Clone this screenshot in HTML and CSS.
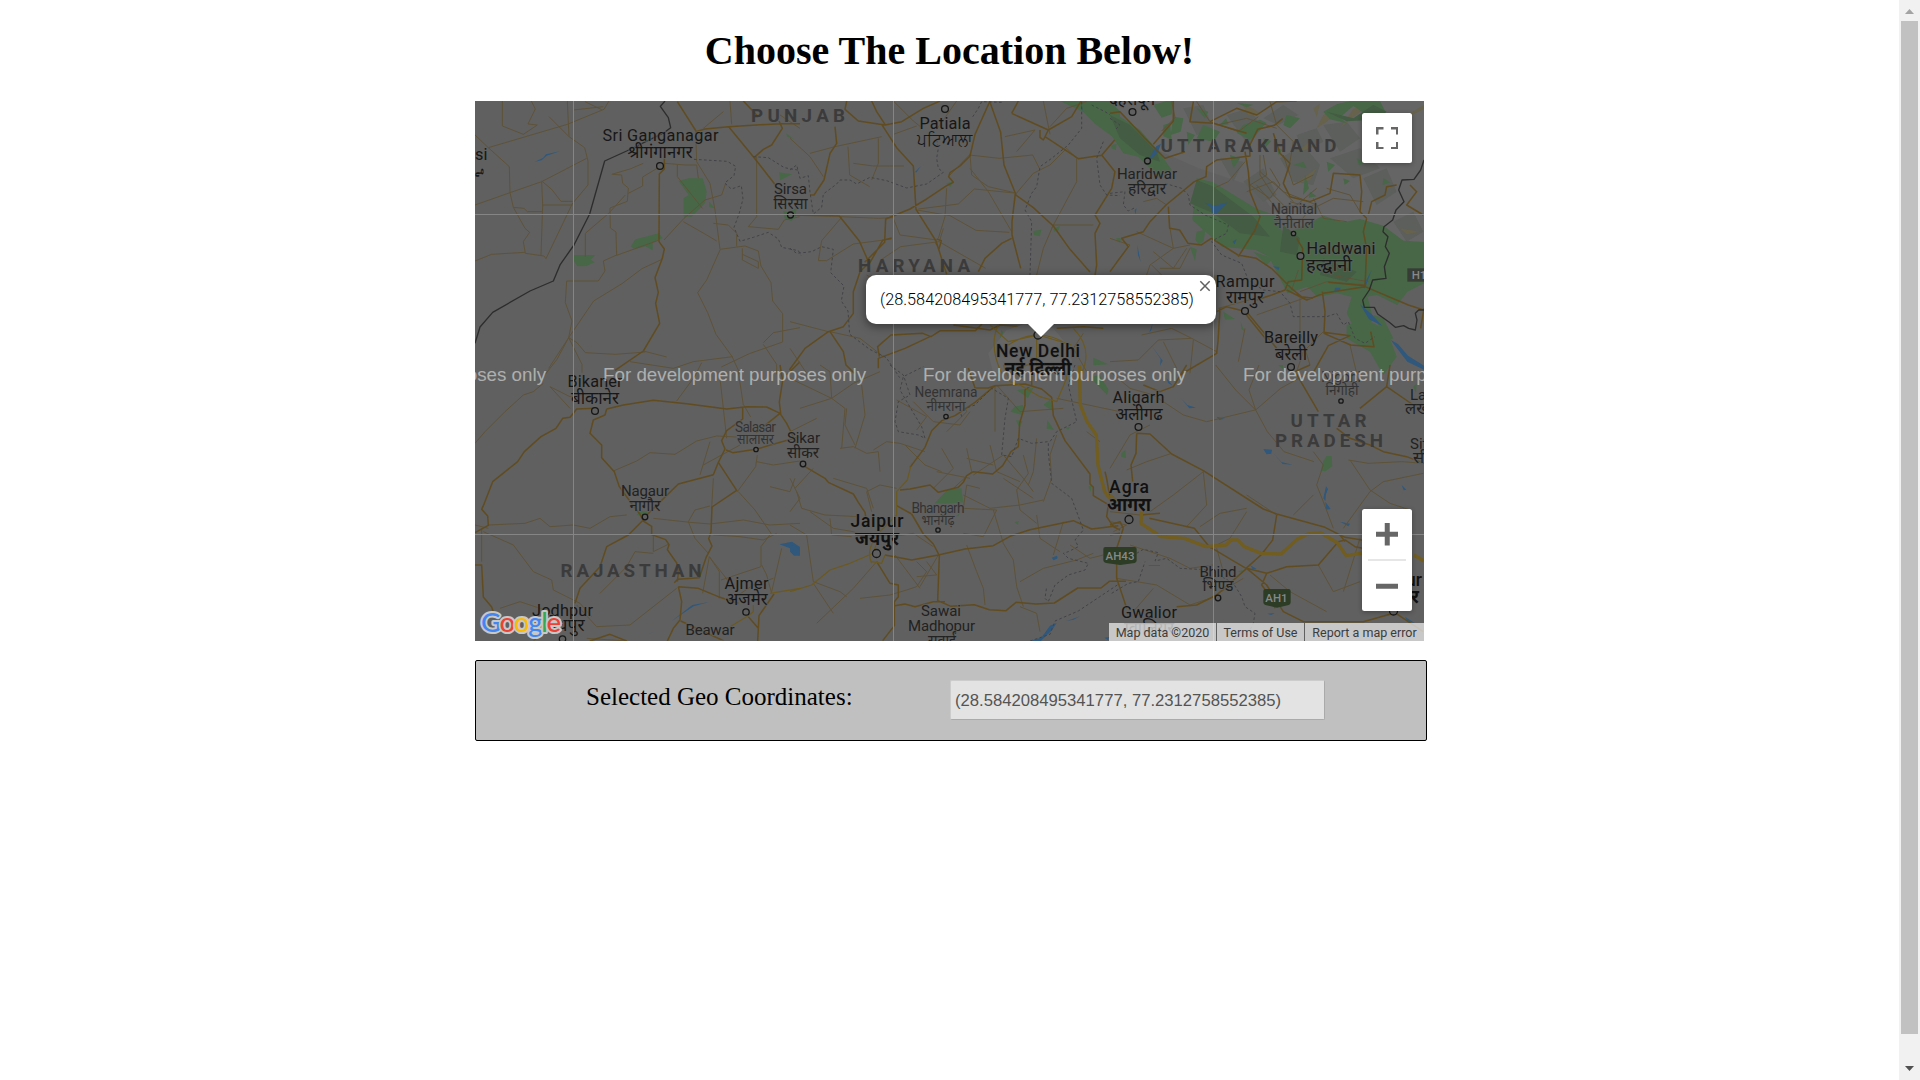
FILE: index.html
```html
<!DOCTYPE html>
<html lang="en">
<head>
<meta charset="utf-8">
<title>Choose The Location</title>
<link rel="stylesheet" href="styles.css">
</head>
<body>
<main class="page">
  <h1 class="title">Choose The Location Below!</h1>
  <section class="map">
    <svg class="map-canvas" viewBox="475 101 949 540" width="949" height="540">
      <!-- north-west -->
      <g transform="translate(470 95) scale(.33333)">
        <g class="park">
          <path d="M626 258l30-8h42l12 40-5 35-20 20-20 20h-24v-55l15-10zM718 320l16 20-16-4zM482 455l14-22 40-10 30-8 12 15-30 12v24l-22-12-30 8zM310 480h66l-14 14 12 8-26 12h-26l-12-18zM928 232l38 6-36 18zM948 115l24 18-20-8zM940 348l40 10-16 20-20-8z"/>
        </g>
        <path class="water" d="M195 200l25-12 8-10 42-9-40 13-15 14z"/>
        <g class="minor">
          <path d="M97 18v75l63 25 42-28-28-3 22-45-12-24M15 120l40 38 237-70 110-45 15-25M292 18l5 107 47 33 10 40v72l-46 55M310 45l90-10M345 20l50 24M55 158l63 57 2 78-105 37M120 293l95-33 135-70M215 258l30 25 28 36h35M215 260l3 70-5 152M218 330h90M120 293l10 44 32 3 10 10h45M130 337l35 63 14 12-19 28 6 35 56 8 6 8 80-167M15 498l50-20 100-6M297 125l-60-60M427 238l28 2 3 25 17 14-3 40-52 20 1 60 17 12 2 70 125-45M520 205l-40 17-55 16M475 295l43-22v-27l50-30M440 480l-40 18 5 30-20 30H290l-4 65 20 55-10 50 40 80v25M346 485v-70l70-60 50-55M296 728l-60 92M296 728l25 15 25 30 90 5 90-7M296 728l75-110 85-52 60-45 60-28M296 728l-35 65-35 45M585 205l60 5h35l5 40M622 210v35l75 95M677 110l3 90 40 65 15 80 15 118 75-10 40 15 8 45 30 50 5 55 30 38v85l-100 35-84 40M750 465l-40 90-27 38 30 60 25 65 48 66 25 55M817 460v35l48 25v-20l-48-22M730 385l45 5 25 25v40M640 380l70 40 30 18M582 435l60-65 63-55 50-15 12-35M860 185v180l-25 30 90 8 18-28 46-10M480 800l130 20 60-20 118-15M520 768l70 18M880 748l40 60v30M990 698l-80 15-30 30M780 18l5 70M700 100l60-50M930 60l60 40"/>
        </g>
        <g class="major">
          <path d="M622 20l56 88M677 110l28-8 71-7 154-9h60M776 95l74 90 82 105M820 18l42 44M852 188l28-25 25-13 32-50-10-22M583 190v32l-15 15-1 203 16 22-6 28-22 58 10 44-8 33 12 60-49 83-85 58M990 800l-40 40"/>
        </g>
        <path class="border" d="M585 18l-14 16 24 34 7 30-18 14-114 56-66 30-45 159-47 93-41 58-21 50-70 30-112 64-38 44-15 49"/>
        <path class="district" d="M672 193l100 6 25 15-5 28-28 22 20 18 30-10 5 40-12 45-15 40 18 42 40-12 45-15 30 20 10 25 50 10 8 14M850 185l45 3 48 30 45 8"/>
      </g>

      <!-- north-centre -->
      <g transform="translate(790 95) scale(.33333)">
        <g class="park">
          <path d="M810 18h160l20 10v110l-35-22-40-30-35-35zM0 350l20-12-4 30-16 10zM468 265l20-5-6 16zM730 408l24-4-4 20-18-4zM790 402l20-10-4 14-14 4zM965 150l15-3-3 18-13-5zM910 788l45 20-45 3zM640 712l-12 28 6-35zM978 430h12v14z"/>
        </g>
        <path class="water" d="M374 232l18-18-12 18zM874 20l4 28-5-8zM698 706l14-6-10 8z"/>
        <g class="minor">
          <path d="M0 130l60 55 40 60M60 175l75-20 140-30M174 155l5 85 60 35M265 130v75l-20 50M310 118l70-25M190 205l60 8h92M310 18l60 60 25 20M500 18l-60 85M470 280l-5 85-20 65M385 342l120-15 48-45 120 12M480 240l60-62M538 180l90 10 100-10 20 40M540 180l5 60 50 35 78 18M380 345l100 17 78 44 100 6M310 368l-45 2-115-5M305 432l-115 15-80 50h-25l10-60 60-70M440 435l-110-15-20-50M447 440l-115 15-60 40M447 440l140 80M460 400l-12 40M675 300l55-65 50-25 50-50 30 30v70l-75 140M680 170l55-65-90 20M790 390h120M740 540l20-80 30-70M665 410l-70-120-55-70M0 680l115 30M230 540l80 50M0 760l50 75M120 710l90 20 70 55M880 715l-30 45 40 70M890 20l-60 20-50 55M760 18l20 100"/>
        </g>
        <g class="major">
          <path d="M170 18l-5 25 40 35 80 12 50-10 65-40 50-22M275 88l45 70 50 55 8 130 60 95 32 100M285 88l-25-38-15-32M600 18l-45 100-15 65-30 30-30 20-4 12 14 17-20 10-60 40-50 30-73 30-3 70-60 60M600 22l32 90 10 98 34 85-10 85v40l26 100M675 298l55 40 60 55 50 70 60 68M665 430l-30 15-50 45-20 40M665 55l110 50-15 30-10-8v-22M665 55l20-37M765 125l100 66 70-10 55-65M775 105l70-40 28-47M935 180l40 50-10 50-50 80 15 25-15 30 5 95-8 50M0 360l148 3 60 75 30 68 40-70 27-7M240 500l-30 30-20 60v65l-30 40-45 15-70 50-47 65M120 710l40 60 8 40 25 25M268 785l-5-30 40-35 95-5 25 10 28-18h105l20-20M420 725l-75 35-80 30v30M490 690l110 15 30-15 70 5M800 700l80-5 60 5M440 432l14 5-7 25-10-20M135 95l5 50-20 30-18 80-30 45H60"/>
        </g>
        <path class="urban" d="M650 705l60-20 80 15 50 60 10 75H610l-15-60z"/>
        <g class="ring"><path d="M625 690q-30 60 10 145M850 700q60 60 25 135M655 750q90-60 180 0M660 835q90-60 160 0M740 690v145M600 690l55 50 90-20 100 30"/></g>
        <path class="district" d="M0 225l20-15 10 40 25-8 5 50 10 65 25-20 5-40 40-30 10-12h30l20 12 40-20 50 10 60 22 60-12 50-35-15-12-5-30 5-30-5-25M0 460l20 15 45-5 30-15 35 8-8 70 40 40-8 45 20 30 5 70 60 45 50 25 40 60M635 22l-60-2-10 20-20 30M875 20v80l-40 50-50 40-35 25-10 60-15 20-20 50 20 35-5 160M905 30l40 20 40 25M940 140l-20 50 10 80 20 30 40 2"/>
      </g>

      <!-- north-east -->
      <g transform="translate(1110 95) scale(.33333)">
        <path class="hills" d="M0 18h942v440l-80-10-90-60-110-10-50 30-110-40-60-90-180-60L130 160 40 60z"/>
        <g class="slopes">
          <path d="M350 60l70-20 35 60-40 50zM460 70l60-40 45 30-60 30zM220 40l60-10 30 70-50 20zM510 190l70-40 50 60-20 60-60-10zM640 90l70-10 40 50-60 40zM660 190l90-30 60 60-80 30zM400 260l60-40 40 80-40 20zM760 250l70-30 30 70-60 40zM330 190l70 10-30 60zM560 120l60-20 20 40-60 30zM850 380l60-30 30 60-50 30z"/>
        </g>
        <g class="ridge">
          <path d="M640 60l-20 40 30-20 50-44zM690 100l60-50 40-28-60 20zM870 100l20-40 52-30v12l-40 20zM560 170l40-30 15 10-30 16zM800 210l50-60 60-30-30 40-50 30zM870 400l60 10-40 8zM550 270l70-50-20 35zM395 25l20 35 40-2-30-20zM760 80l50 12-30 20zM610 40l20-14-10 40z"/>
        </g>
        <g class="park">
          <path d="M0 50l30 15 60 40 60 70 35 50-40 20-60-60-45-10-40-60zM260 250l50 12 130 80 60 20 20 60 60-30 60-30 60 20 50-10 70 20 60 45 80 5 42 20v110l-50-12-60 30-30 40-60-30-60 10-60-15-60 10-30-30-60 20-55-110-40-20-100-10-90-80zM260 410l26-6-5 35-15 10-10-15zM130 30l40-12h20l-5 40-30 10zM190 65l30 5-8 40-30 10zM160 90l20-6 5 50-25-10zM230 110l25 10-20 30zM400 90l50-16 20 10-50 50-40-20zM640 50l40-22 40-10h90l20 40-70-5-30-20-40 34 20 18-50-12zM530 60l40 10-30 30-20-10zM260 40l35 10-10 20zM380 24l50 5-20 8zM280 90l50 20-20 30-50-10zM430 470l60 20-20 20zM240 455l20 8-5 35zM340 650l35 22-30 2zM392 680l12 30-10-8zM730 590l40 5 20 80-50 40-30-60zM710 690l60-15 60 30 30 80-40 55-40-70-70-40zM790 660l30 10 30 60-20 10zM900 460l42 5v60l-42-30zM360 180l30 10-20 30zM550 210l30-10 10 20zM585 240l12 40-18 20zM650 200l25 10-20 20zM740 190l25 15-18 6zM20 430l25 2-25 8zM460 130l24 8-18 20zM500 160l16 4-10 16zM700 250l20 8-16 12zM820 250l20 12-22 8zM600 290l20 14-24 4zM860 60l24 8-20 16zM330 90l18-20 8 18z"/>
        </g>
        <g class="forest"><path d="M0 60l60 30 80 80 10 30-60-20L30 130zM260 255l50 20 120 90 50 60-90-10-80-60-70-30zM650 50l80 20 60-40 40 20-40 24-80 5zM520 390l50 40-10 50-50-10zM640 490l100 40-30 30-80-20z"/></g>
        <path class="water" d="M121 184l18-30 14-8-10 28-22 20zM282 322l32 10 40-10-34 34-12-2-6-18zM82 450l10 50-8-20zM125 752l33 45-8 15 2-20zM76 360l4-20-6 5zM368 440l12-8-6 16zM488 514l20 2-2 10zM675 578h16v10h-18zM118 712l10-28-4 22zM785 525l-20 55-8-2zM750 628l35 30 32 35-40-20zM842 735l22 12 30 35 48 30v12l-50-24z"/>
        <g class="minor">
          <path d="M185 18l10 50-40 40M260 20l40 60 85 30 60-45M320 90l90-20 90 30M480 20l20 70 50 50-10 60M405 200l-50 60-45 20M460 180l10 60-50 30 60 40 30-40-30-50M520 180l30 90 60-30M440 270l60 70 60-10 60-50M410 290l80-30 60 60M450 230l70 60 100 40M540 320l70 20 60-30 90 10M610 310l30 60 70 10M450 180v60l40 60 45 45M610 330l-40 50M650 280l70 20 30 50M180 400l10 60-70 50-20 60M240 450l-50 10-110-50M130 470l60 50 40-60M150 520h60l30-60M0 430l60 20-40 50M125 510l60 60M315 540v60M545 585l20-60M570 610v100l30 100M440 660l140-50M320 770l-75-40-60-30-90 20M250 735l-10 100M0 800l85-5 60-60 100-5M160 740l40 80M325 640l110-30M570 590l80-30 120 10M660 540l115 20M640 710l-60 60-20 60M720 750l20 85M405 700l-20 100M100 320l40-10 30 20"/>
        </g>
        <g class="major">
          <path d="M0 530l55-75-20-25 65-20 20-30 48-50 85-70 35-15 2-30 30-20 100-12-2-30 25-50 50-12 25-20M175 335l4 65 30 5 25 40 40 5 30-20 80 50 55 10 45 30 60 60 30 25 35 5M0 55l30-5 75 80 60 60 60-20M190 18v60l-60 70M250 20l-10 60 70 5 100 30M300 80l80-40 60 20 60-40 60-2M405 170l10 60 5 60 30 75-15 40-50 80M560 430l18 30-3 95-40 5-10 25-40 15-45 15M770 370l-20-20 5-60-5-50-80-5-10 60-60 25-60-15-20-40 20-60-30-30-20-60M775 360l10-40 40-20 5-25 30-5M900 270l20 20-30 40 50 30M770 370l-10 40 10 50-5 115-125 20M765 572l-110-10M765 575l130 55 47 15M637 590l8 60-3 65 80 35 70 5-10-45M640 712l80 10-65 30-45 80M320 650l30-15 60 15 90 110M330 640l-6 100-4 35-110 65M405 655l65 80M530 585l60 30 50-20M942 640l-10 60"/>
        </g>
        <path class="border" d="M942 195l-10 30-20 28-36 2-10 30 16 35-24 25-10 30-26 20-3 15 15 15-8 30 12 20-15 40 5 35-40 5-10 30-20 30 5 22h30l10 20 35 25 18 15 25-5 15 8 20 5 5-30-5-20 10-10h20"/>
        <path class="district" d="M0 70l30 20-15 15M165 265l50 15 20 20 5 30 45 30 70 30-5 25-30 15-15 10 30 40 60 25 20 50 45 30 50 5 30 35 10 40h100l30-10 20 35 15-10 20 50 30 15 30-20M0 295l45-5-5 40 15 18 20-10"/>
        <g class="shield-dark"><path d="M892 520h50v40h-50z"/></g>
      </g>

      <!-- south-west -->
      <g transform="translate(470 365) scale(.33333)">
        <path class="park" d="M500 450l12-12 20 2v14z"/>
        <path class="water" d="M928 538l38-8 24 16v26l-14-4-8-15zM605 768l62-48 50-9-46 13zM536 806l26-8-20 6z"/>
        <g class="minor">
          <path d="M15 235l30-35 60-60 55-50 30-10 30-25M240 65l60 65M240 65l60 30 60-10M430 318l70-30 40-25 75 5 65-40 60-15 60 3M620 108l55-75 20-40M805 20l15 100M820 118l22 38M862 270l-5 35-55 75M860 290l50 10 80-12M900 365l60 15 15-40M55 480l110-5 45-15 30 25 70-5 50 10 60-35 50-5M35 490v100M40 500l90 40 60 80 55 25 5 30 40 20 40 20 35 40M550 460l110 12 60 5 100-12 80 15 90-5M655 470l20-35 45-12M655 470l20 50 40 45M805 380l50 55 48 70-30 40v60l-60 20-60 20M730 510l80 5 70 10 40-20M550 510v50l45-22M495 560l55 5M495 560l-25 45-80 80M718 575l-20 110M718 575l30 45v80M718 575l70 90M790 700l60-40 60-20M875 600l15 30 15 55M320 720l60 65 100-5 140-110M15 480l40 10M90 730l60-20 90 30M250 780l-60 48M350 820l120 8M690 330l30-100M700 300l110-60M935 550l-30 130M770 220l-20-180M725 430l5-90"/>
        </g>
        <g class="major">
          <path d="M375 130l-55 2-20 25-22 3-20 30-45 25-50 45-20 30-75 60-25 65-8 18 18 20 2 28-40 22M410 132l50-12 90-14 100 10 120 16 60-7 60 1 42 20-4-35 10-65-8-46M410 132l-5 18-35 15-10 40 35 35v38l38 42 15 45 40 55 22 28 10 20 25 16v25l42 15 10 15-5 15 28 40 5 30-3 25M525 460l-50 50-65 35-20 60-60 65-15 45M525 455l100-98 105-28 15-37 55 84-74 50-3 75-7 20 10 22-18 35-20 60-65 5-10 10M745 292l20-40-10-25 15-30 48-35v-35M768 255l20 8 70-10 130-38M930 145l20 30 40 80M930 145l-72 58M15 600h20l5 96 25 30 10 30M625 665l60 5 60 25 60 20M625 665l10 45-5 55-20 25-18 38M360 828l60-20 50 20M835 755l30 35 2-38 45-65M865 790l-2 38M632 768l130 60"/>
        </g>
        <path class="yellow-thin" d="M780 785l50-30 20-15v-20M900 685l90-15"/>
      </g>

      <!-- south-centre -->
      <g transform="translate(790 365) scale(.33333)">
        <g class="park">
          <path d="M434 415l38-40 42-5 6 42-50 4zM498 454l12-10-4 10zM674 125l25-5-2 30-36-10zM678 166l20 2-10 20zM762 118l18-14 10 35-28-18zM772 165l20 30-22-4zM910 35l18-6 28 45-5 15-38-38zM895 365l10-5-3 20zM680 75l50-6-16 30zM674 472l12-4-2 12zM826 188l16-2-8 8z"/>
        </g>
        <path class="water" d="M0 540l18 4 12 14-2 14H12L0 560zM785 578l16-6 2 8-12 6zM720 828l34-10 26-36 20-8-14 22-34 32zM830 768l40-14-20 10zM943 818l14-2-2 10z"/>
        <g class="minor">
          <path d="M125 100l-5-80-30-20M125 100L0 40M125 100l65-45 80-35M125 100l-95 30M125 100l40 30-10 120M170 130l-5 50 30 60M215 60l10 90-30 100M0 200l80-40M250 255l40-25 40 5 75 25M150 250l40-5 40 20 35-5 5 60M130 340l100 30 20 60M245 440l-15-60 40-20 50 10M15 370l55-60M20 380l15 50 70 20 100 5M60 440l70 50 60 10 50 20M320 105l90 50-30 40M370 110l60 60 80 10 30-40M510 100l20 40-60 60M430 370l60-60-35-60M440 320l100 20M530 250l15 70-55 50M550 330l90-60 60 70 30 40M570 370l-40-10-10 70 100 5-40 80-60-10M520 390l80 40 90-10 70-15M600 240l20 80 70 30M700 270l15 55-35 50 10 60 50 40M640 340l90 60M610 435l30 100 30 50 10 80 20 60M530 540l30 80 20 50 5 50M690 650l70-40 100-25 50-20M380 590l30 30-30 45-30 10-50 15-90 10M410 590l30 40-60 5M315 570l60 80 15 20M445 570l-55 95M345 240l60 60 50 20M740 220l-10 100-15 40M800 210l-20 60 5 70-25 70M0 480l50 30 20 140 80 30 20 15M120 460l5 50 60 5M0 340l30 60-30 40M70 655l60 90M260 590l-70 80-110 105M740 450l10 70 60 40M820 470l-30 100M310 515l60-10 60 40M530 280l80 20M750 800l-10-55-50-20M840 540l60 40 40-10M620 60l70 80 130-10M800 100l190 40M890 200l40 30M615 60v140"/>
        </g>
        <g class="major">
          <path d="M40 302l65 38 10 12 75 35 15 25 20 30 5 30M330 375l30-3 60-12 25 22 60-15 15-15 10-20 20-12 58 7 30-25 25-42 22-15 4-70 16-55v-45l20-15v-40M615 62l-60 50-60 40-40 15-30 30-20 50-45 60M615 62l-20 7h-40l-20-60M615 62l90-5 50 15 30 25 5 55 35 75 75 100v30l10 10v25l50 30M320 422l45 25 35 60 30 30 18 35-5 135 40 17 70-5 45 15 50 3 30-25 60 5 55-3 70-45h70l25-20h50M260 590l40 65 25 5v35l-12 15v72l-35 45M315 722l30-5 30 8 55-15h35M285 570l80 15 80-15 80-18 85-10 50-28 60-20 130-27 55 25 80-10M955 420l-5 35 20 30 20 10M960 400l-10-60-5-20"/>
        </g>
        <path class="yellow-thin" d="M362 305l-10 40-32 35v70l-50 50-20 65-70 30-60 20-55 45-65 20M640 0l20 50 30 10 60 35 50 15 30-70-10-40M245 590l30 5 10-25M250 530q-20 30-5 65"/>
        <path class="highway" d="M868 0l3 120 20 50 28 40 5 90 20 80 15 20"/>
        <path class="district" d="M300 0l40 30 20 60-35 20-10 60 10 30 60 10 20 10-10-35-30-50-35-60 10-40 60-30M515 155l-5-20 45-15 50-50 50 30-10 60-10 110 30 5 20-55 40 15 50-5v35l10 90 60 45 15 40 20 55-25 30 10 20-30 15-15 5 15 15 60 15-10 20-50 15-40 30-20 50-10-10 5-35M855 0l-20 60 25 110-60 30-20 30M720 828l60-20 15-40 70-30 60-40 60-40"/>
      </g>

      <!-- south-east -->
      <g transform="translate(1110 365) scale(.33333)">
        <g class="park"><path d="M640 288l10-15h15l2 30-20 16-15-2zM34 265l12-10 2 24-14-4zM910 65l10-10-2 30zM505 0h14v12zM383 620l15-5v8z"/></g>
        <path class="water" d="M212 98l20 22 26 8-20 2zM460 252l26 2-2 12-14 2zM490 265l24 26 34 8-30-2zM320 155l24 6-16 4zM640 400l8-36 6 8-6 16-2 20zM646 410l16 22-14 2zM690 470l30 6-5 8zM170 40l18 22-14-8zM420 600l20 12h-12zM116 601h34v2h-34zM472 746l22-2-10 6zM875 360l14 14-8 2zM885 755l30 20-24-6z"/>
        <g class="minor">
          <path d="M0 20l60 50 70 20 90 60 70 20 145-35M437 135l75-65 90-50M437 135l-60-60-60-75M437 135l35 65 50 60 90 30M437 135l-20-60 30-75M280 320l10 100-60 65M280 320l-90 70-70 50M0 310l60-100 60-30M185 265l-75 25-60 25M410 430l-80 15-60 40M410 440l-50 80-60 30M500 450l-90-60M670 490l-30-80-20-50 20-60-30-40M610 390l-60 60M715 285l60 10 100-5 67 5M720 285l60 90 60 40 60 20M780 380l40-30 120-25M780 380l-80 110M625 600l45 80 80-30M750 520l-50 160M0 440l90 10M60 540l120 40 60 30 70-10M20 640l120 20 100 60M240 720l60-20 100-60M70 740l60-70M480 630l60 50 110 60M340 620l-20-70M0 470l50 10-40 20"/>
        </g>
        <g class="major">
          <path d="M80 205l40 2 65 60 95 50 180 115 40 15 145 40 60 30 65 10M80 205l-2 60-15 35 5 50M500 450l-12 75-35 45-45 40-110-65-45-55-135-30M90 450l60-5M555 20l70 120M600 0l-45 20M750 130l80-65 80 55M830 65l10-65M100 60l50 20 40-15 40-65M410 610l60 15 60-20 95-5 60-70 20-5 30 20 50 10M470 625l-15 35 30 40 10 30M410 610l60 50 50 80 60 30h180l90-25M410 610l-90 80-60 30-60 5M705 530l-15-20-20-10M40 490l-20 60v90l30 90M0 480l30-10 10 20M680 190l40 30 60 20 40 20 70 15 52 20M0 510l30-5M850 740l90 60"/>
        </g>
        <path class="highway" d="M95 440l-2 35 60 40 70 5 65 25 60-5 15-15h20l20 20 50 20 60 2 50-45 30-15 40-3 50 30 25 38 50-8h55M912 570l30 18M0 390l20 20"/>
        <path class="district" d="M80 565l20-12 45 10-10 25 35-8 40 30 90 5 70 40 25 40 10 30 30 20-5 30-10 20M5 685l50-30 30-5 20-60"/>
        <g class="shield"><path d="M-14 546H74q6 0 6 6v34q0 6-6 8L31 600-12 594q-8-2-8-8v-34q0-6 6-6zM466 672h70q6 0 6 6v34q0 6-6 8l-35 8-35-8q-6-2-6-8v-34q0-6 6-6z"/></g>
      </g>

      <!-- place labels -->
      <g class="city">
        <g class="dots">
          <circle cx="660" cy="166" r="3.4"/><circle cx="790.5" cy="215" r="3"/><circle cx="945" cy="109" r="3.4"/><circle cx="1132.500" cy="112" r="3.4"/><circle cx="1147.500" cy="161" r="3"/><circle cx="1293.500" cy="233.500" r="2.200"/><circle cx="1300.500" cy="256" r="3.400"/><circle cx="1245" cy="311" r="3.400"/><circle cx="1291" cy="367" r="3.400"/><circle cx="595" cy="411" r="3.400"/><circle cx="756" cy="449.500" r="2.200"/><circle cx="803" cy="464" r="2.800"/><circle cx="645" cy="517" r="2.800"/><circle cx="746" cy="612" r="3.200"/><circle cx="562.500" cy="639" r="3.200"/><circle cx="946" cy="416.500" r="2.200"/><circle cx="938" cy="530" r="2.200"/><circle cx="876.500" cy="553.500" r="4"/><circle cx="1138.500" cy="427" r="3.400"/><circle cx="1129" cy="519.500" r="4"/><circle cx="1341" cy="401" r="2.200"/><circle cx="1218" cy="598" r="2.800"/><circle cx="1393.500" cy="611" r="4"/><circle cx="1038" cy="335" r="4"/>
        </g>
        <text x="660.500" y="141" textLength="116">Sri Ganganagar</text><text class="hi" x="660" y="158" textLength="65" lengthAdjust="spacingAndGlyphs">श्रीगंगानगर</text>
        <text class="start" x="475" y="159.500">si</text><text class="start hi" x="475" y="174" textLength="9" lengthAdjust="spacingAndGlyphs">مے</text>
        <text class="m" x="790.500" y="194" textLength="33">Sirsa</text><text class="hi m" x="790.500" y="209" textLength="34" lengthAdjust="spacingAndGlyphs">सिरसा</text>
        <text x="945" y="129" textLength="51">Patiala</text><text class="hi" x="944.500" y="145.500" textLength="56" lengthAdjust="spacingAndGlyphs">ਪਟਿਆਲਾ</text>
        <text class="hi" x="1132" y="104.500" textLength="46" lengthAdjust="spacingAndGlyphs">देहरादून</text>
        <text class="m" x="1147" y="178.500" textLength="60">Haridwar</text><text class="hi m" x="1147" y="193.500" textLength="38" lengthAdjust="spacingAndGlyphs">हरिद्वार</text>
        <text class="s" x="1294" y="214" textLength="46">Nainital</text><text class="hi s" x="1294" y="228" textLength="40" lengthAdjust="spacingAndGlyphs">नैनीताल</text>
        <text x="1341" y="253.500" textLength="69">Haldwani</text><text class="hi" x="1329" y="270.500" textLength="46" lengthAdjust="spacingAndGlyphs">हल्द्वानी</text>
        <text x="1245" y="286.500" textLength="59">Rampur</text><text class="hi" x="1245" y="303" textLength="38" lengthAdjust="spacingAndGlyphs">रामपुर</text>
        <text x="1291" y="342.500" textLength="54">Bareilly</text><text class="hi" x="1291" y="359.500" textLength="32" lengthAdjust="spacingAndGlyphs">बरेली</text>
        <text x="595" y="387" textLength="55">Bikaner</text><text class="hi" x="595" y="403.500" textLength="48" lengthAdjust="spacingAndGlyphs">बीकानेर</text>
        <text class="s" x="755.500" y="432" textLength="41">Salasar</text><text class="hi s" x="755.500" y="444" textLength="37" lengthAdjust="spacingAndGlyphs">सालासर</text>
        <text class="m" x="803.500" y="442.500" textLength="33">Sikar</text><text class="hi m" x="803" y="457.500" textLength="32" lengthAdjust="spacingAndGlyphs">सीकर</text>
        <text class="m" x="645" y="496" textLength="48">Nagaur</text><text class="hi m" x="645" y="510.500" textLength="31" lengthAdjust="spacingAndGlyphs">नागौर</text>
        <text x="746.500" y="588.500" textLength="44">Ajmer</text><text class="hi" x="746.500" y="604.500" textLength="42" lengthAdjust="spacingAndGlyphs">अजमेर</text>
        <text x="562.500" y="615.500" textLength="61">Jodhpur</text><text class="hi" x="562" y="631" textLength="45" lengthAdjust="spacingAndGlyphs">जोधपुर</text>
        <text class="m" x="710" y="635" textLength="49">Beawar</text><text class="hi m" x="710" y="651">ब्यावर</text>
        <text class="s" x="946" y="397" textLength="63">Neemrana</text><text class="hi s" x="946" y="411" textLength="39" lengthAdjust="spacingAndGlyphs">नीमराना</text>
        <text class="s" x="938" y="512.500" textLength="53">Bhangarh</text><text class="hi s" x="938" y="525" textLength="33" lengthAdjust="spacingAndGlyphs">भानगढ़</text>
        <text class="b" x="877" y="526.500" textLength="53">Jaipur</text><text class="hi b" x="877" y="545" textLength="44" lengthAdjust="spacingAndGlyphs">जयपुर</text>
        <text class="m" x="941" y="616" textLength="40">Sawai</text><text class="m" x="941.500" y="631" textLength="67">Madhopur</text><text class="hi m" x="942" y="646" textLength="28" lengthAdjust="spacingAndGlyphs">सवाई</text>
        <text class="b" x="1038" y="356.500" textLength="84">New Delhi</text><text class="hi b" x="1038" y="375" textLength="67" lengthAdjust="spacingAndGlyphs">नई दिल्ली</text>
        <text x="1138.500" y="403" textLength="52">Aligarh</text><text class="hi" x="1139" y="419.500" textLength="47" lengthAdjust="spacingAndGlyphs">अलीगढ</text>
        <text class="b" x="1129" y="493" textLength="40">Agra</text><text class="hi b" x="1129" y="511" textLength="44" lengthAdjust="spacingAndGlyphs">आगरा</text>
        <text class="s" x="1341" y="382">Nigohi</text><text class="hi s" x="1342" y="395" textLength="33" lengthAdjust="spacingAndGlyphs">निगोही</text>
        <text class="start m" x="1410" y="400">Lakhimpur</text><text class="start hi m" x="1405" y="414">लखीमपुर</text>
        <text class="start m" x="1410" y="449">Sitapur</text><text class="start hi m" x="1413" y="463">सीतापुर</text>
        <text class="m" x="1218" y="576.500" textLength="37">Bhind</text><text class="hi m" x="1218" y="590.500" textLength="31" lengthAdjust="spacingAndGlyphs">भिण्ड</text>
        <text x="1149" y="617.500" textLength="56">Gwalior</text><text class="hi" x="1149" y="634" textLength="50" lengthAdjust="spacingAndGlyphs">ग्वालियर</text>
        <text class="b" x="1394" y="586">Kanpur</text><text class="hi b" x="1394" y="603" textLength="50" lengthAdjust="spacingAndGlyphs">कानपुर</text>
        <g class="shield-text"><text x="1120" y="560">AH43</text><text x="1276.500" y="602">AH1</text><text x="1419" y="279">H1</text></g>
      </g>
      <g class="state">
        <text x="798" y="121.500" textLength="94">PUNJAB</text>
        <text x="1248.500" y="151.500" textLength="176">UTTARAKHAND</text>
        <text x="914" y="271.500" textLength="112">HARYANA</text>
        <text x="1328.500" y="426.500" textLength="76">UTTAR</text>
        <text x="1329" y="446.500" textLength="108">PRADESH</text>
        <text x="631" y="576.500" textLength="141">RAJASTHAN</text>
      </g>
      <path class="grid" d="M573.500 101v540M893.500 101v540M1213.500 101v540M475 214.500h949M475 534.500h949"/>
      <g class="watermark">
        <text x="283" y="381" textLength="263">For development purposes only</text>
        <text x="603" y="381" textLength="263">For development purposes only</text>
        <text x="923" y="381" textLength="263">For development purposes only</text>
        <text x="1243" y="381" textLength="263">For development purposes only</text>
      </g>
      <text class="logo" x="481" y="631.500" textLength="80"><tspan class="blue">G</tspan><tspan class="red">o</tspan><tspan class="amber">o</tspan><tspan class="blue">g</tspan><tspan class="green">l</tspan><tspan class="red">e</tspan></text>
    </svg>

    <div class="popup">
      <span>(28.584208495341777, 77.2312758552385)</span>
      <svg class="popup-close" viewBox="0 0 12 12" width="12" height="12"><path d="M1.300 1.300l9.400 9.400M10.700 1.300l-9.400 9.400"/></svg>
    </div>

    <div class="control fullscreen">
      <svg viewBox="0 0 18 18" width="22.500" height="22.500"><path d="M0 0v6h2V2h4V0H0zm16 0h-4v2h4v4h2V0h-2zm0 16h-4v2h6v-6h-2v4zM2 12H0v6h6v-2H2v-4z"/></svg>
    </div>
    <div class="control zoom">
      <svg viewBox="0 0 18 18" width="22.500" height="22.500"><path d="M18 7h-7V0H7v7H0v4h7v7h4v-7h7z"/></svg>
      <div class="zoom-divider"></div>
      <svg viewBox="0 0 18 18" width="22.500" height="22.500"><path d="M0 7h18v4H0z"/></svg>
    </div>
    <div class="credits"><span class="credit-data">Map data ©2020</span><span class="credit-terms">Terms of Use</span><span class="credit-report">Report a map error</span></div>
  </section>

  <section class="coords">
    <label class="coords-label" for="geo">Selected Geo Coordinates:</label>
    <input class="coords-input" id="geo" type="text" value="(28.584208495341777, 77.2312758552385)" disabled>
  </section>
</main>
<aside class="scrollbar">
  <svg viewBox="0 0 9 5" width="9" height="5"><path class="up" d="M0 5h9L4.500 0z"/></svg>
  <div class="thumb"></div>
  <svg viewBox="0 0 9 5" width="9" height="5"><path class="down" d="M0 0h9L4.500 5z"/></svg>
</aside>
</body>
</html>
```
FILE: styles.css
```css
* { box-sizing: border-box; }
body { margin: 0; height: 1080px; display: flex; overflow: hidden; background: #fff; color: #000; font-family: "Liberation Serif", serif; }
.page { width: 1899px; display: flex; flex-direction: column; align-items: center; }
.title { margin: 28px 0 27px; font-size: 40px; line-height: 46px; font-weight: bold; }

.map { position: relative; width: 949px; height: 540px; overflow: hidden; background: #606060; }
.map-canvas { display: block; }
.map-canvas path { fill: none; stroke-linejoin: round; }
.map-canvas .park path, .map-canvas path.park { fill: #476747; }
.map-canvas .forest path { fill: #435c43; }
.map-canvas path.water { fill: #2f587c; }
.map-canvas path.hills { fill: #656565; }
.map-canvas .slopes path { fill: #5c5f5c; }
.map-canvas .ridge path { fill: #67624c; }
.map-canvas path.urban { fill: #666; }
.map-canvas .minor path { stroke: #5e5238; stroke-width: 3; }
.map-canvas .major path { stroke: #604c20; stroke-width: 4.5; }
.map-canvas .ring path, .map-canvas path.yellow-thin { stroke: #6b591f; stroke-width: 3.5; }
.map-canvas path.highway { stroke: #715d20; stroke-width: 10; }
.map-canvas path.border { stroke: #2d2d2d; stroke-width: 4; }
.map-canvas path.district { stroke: #434347; stroke-width: 3; stroke-dasharray: 8 7; }
.map-canvas .shield path { fill: #2c3c25; }
.map-canvas .shield-dark path { fill: #373c35; }
.map-canvas path.grid { stroke: #858585; stroke-width: 1; }
.city text { font: 400 16.25px Roboto, "Noto Sans", "Noto Sans Devanagari", sans-serif; fill: #171717; stroke: #606060; stroke-width: 2px; stroke-opacity: .7; paint-order: stroke; text-anchor: middle; }
.city .hi { font-size: 18px; }
.city .m { font-size: 15px; fill: #222; }
.city .hi.m { font-size: 16.5px; }
.city .s { font-size: 13.75px; fill: #333; }
.city .hi.s { font-size: 14.5px; }
.city .b { font-size: 17.5px; font-weight: 500; fill: #111; }
.city .hi.b { font-size: 19px; font-weight: 700; }
.city .start { text-anchor: start; }
.dots circle { fill: #606060; stroke: #171717; stroke-width: 1.3; }
.city .shield-text text { font-size: 11.5px; font-weight: 500; fill: #888; stroke: none; }
.state text { font: 700 18.75px Roboto, sans-serif; fill: #3b3b3b; text-anchor: middle; }
.watermark text { font: 18.75px "Liberation Sans", sans-serif; fill: #fff; fill-opacity: .5; }
.logo { font: 500 27.5px Lato, sans-serif; stroke: #c8c8c8; stroke-width: 4px; stroke-linejoin: round; paint-order: stroke; }
.blue { fill: #4285f4; }
.red { fill: #ea4335; }
.amber { fill: #fbbc05; }
.green { fill: #34a853; }

.popup { position: absolute; left: 391px; top: 174px; width: 350px; height: 49px; padding-left: 14px; display: flex; align-items: center; background: #fff; border-radius: 10px; box-shadow: 0 2px 9px 1px rgba(0,0,0,.4); font: 300 16.25px Roboto, sans-serif; color: #000; white-space: nowrap; }
.popup::after { content: ""; position: absolute; left: 162px; top: 49px; border: 13px solid transparent; border-top-color: #fff; border-bottom: 0; }
.popup-close { position: absolute; right: 5px; top: 5px; }
.popup-close path { stroke: #606060; stroke-width: 1.5; }

.control { position: absolute; right: 12px; width: 50px; display: flex; flex-direction: column; align-items: center; background: #fff; border-radius: 2.5px; box-shadow: 0 1px 5px rgba(0,0,0,.3); }
.control path { fill: #666; }
.fullscreen { top: 12px; height: 50px; justify-content: center; }
.zoom { top: 408px; height: 102px; justify-content: space-between; padding: 14px 0; }
.zoom-divider { width: 38px; height: 2px; background: #e6e6e6; }
.credits { position: absolute; right: 0; bottom: 0; height: 18px; display: flex; gap: 1px; font: 12.5px/19px Roboto, sans-serif; color: #3c3c3c; white-space: nowrap; }
.credits span { background: rgba(245,245,245,.7); text-align: center; }
.credit-data { width: 107px; }
.credit-terms { width: 87px; }
.credit-report { width: 119px; }

.coords { width: 952px; height: 81px; margin: 19px 0 0 3px; padding: 19px 101px 0 110px; display: flex; justify-content: space-between; align-items: flex-start; background: #c0c0c0; border: 1px solid #000; border-radius: 2px; }
.coords-label { font-size: 25px; line-height: 29px; padding-top: 2px; }
.coords-input { width: 375px; height: 40px; margin: 0; padding: 2px 4px 1px; background: #e3e3e3; border: 1px solid; border-color: #ccc #aaa #aaa #ccc; border-radius: 2px; font: 16.667px "Liberation Sans", sans-serif; color: #545454; }

.scrollbar { width: 21px; height: 1080px; padding: 9px 0; display: flex; flex-direction: column; align-items: center; background: #f1f1f1; }
.thumb { width: 17px; height: 1013px; margin: 7px 0 32px; background: #c1c1c1; }
.up { fill: #a3a3a3; }
.down { fill: #505050; }
```
